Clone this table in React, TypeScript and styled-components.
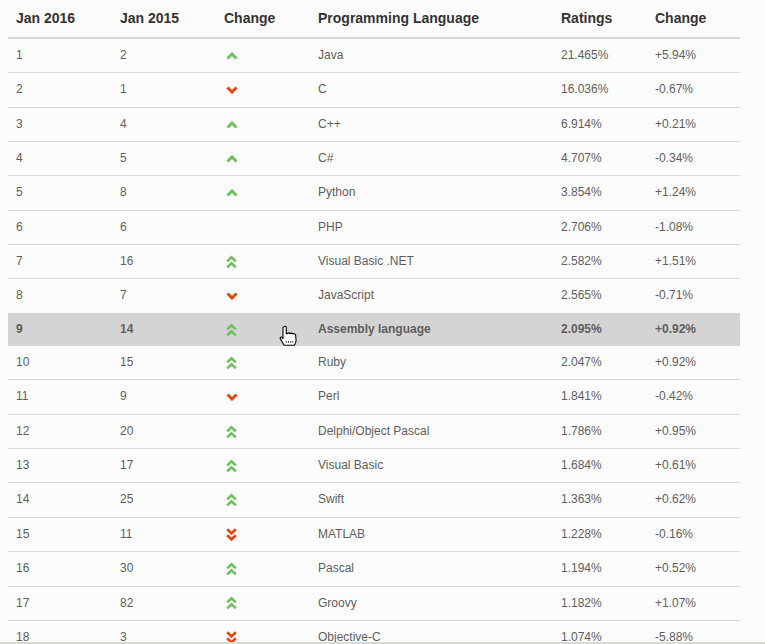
import React from "react";
import styled, { createGlobalStyle } from "styled-components";

const GlobalStyle = createGlobalStyle`
  html, body { overflow: hidden; }
  body {
    margin: 0 0 0 8px;
    background: #fcfcfc;
    font-family: "Liberation Sans", Arial, sans-serif;
  }
`;

const Table = styled.table`
  width: 732px;
  border-collapse: collapse;
  border-spacing: 0;
  table-layout: fixed;
`;

const HeadCell = styled.th`
  text-align: left;
  padding: 8px;
  height: 21px;
  font-size: 14px;
  line-height: 21px;
  font-weight: bold;
  color: #333;
  border-bottom: 2px solid #d6d6d6;
`;

const Row = styled.tr<{ $active?: boolean }>`
  background: ${(p) => (p.$active ? "#d4d4d4" : "transparent")};
  font-weight: ${(p) => (p.$active ? "bold" : "normal")};
  & + & > td { border-top: 1px solid #dadada; }
`;

const Cell = styled.td`
  padding: 8px;
  height: 17.34px;
  font-size: 12px;
  line-height: 17.34px;
  color: #5e5e5e;
  vertical-align: middle;
`;

const IconWrap = styled.span`
  display: inline-block;
  padding-left: 2px;
  vertical-align: middle;
  line-height: 0;
`;

const ScrollEdge = styled.div`
  position: fixed;
  left: 0;
  right: 0;
  bottom: 0;
  height: 2px;
  background: #d8d8d4;
`;

const Cursor = styled.svg`
  position: absolute;
  left: 278px;
  top: 325px;
  pointer-events: none;
`;

type Trend = "up" | "down" | "dup" | "ddown" | "none";

const GREEN = "#6fbf60";
const RED = "#e2470f";

function TrendIcon({ t }: { t: Trend }) {
  if (t === "none") return null;
  if (t === "up" || t === "down") {
    const color = t === "up" ? GREEN : RED;
    const pts = t === "up" ? "1.5,6.5 6,2 10.5,6.5" : "1.5,1.5 6,6 10.5,1.5";
    return (
      <IconWrap>
        <svg width="12" height="8" viewBox="0 0 12 8">
          <polyline points={pts} fill="none" stroke={color} strokeWidth="3" strokeLinejoin="miter" />
        </svg>
      </IconWrap>
    );
  }
  const color = t === "dup" ? GREEN : RED;
  const a = t === "dup" ? "1.2,6.4 5.5,2.2 9.8,6.4" : "1.2,1.2 5.5,5.4 9.8,1.2";
  const b = t === "dup" ? "1.2,12.4 5.5,8.2 9.8,12.4" : "1.2,7.2 5.5,11.4 9.8,7.2";
  return (
    <IconWrap>
      <svg width="11" height="14" viewBox="0 0 11 14">
        <polyline points={a} fill="none" stroke={color} strokeWidth="2.6" />
        <polyline points={b} fill="none" stroke={color} strokeWidth="2.6" />
      </svg>
    </IconWrap>
  );
}

const rows: [string, string, Trend, string, string, string][] = [
  ["1", "2", "up", "Java", "21.465%", "+5.94%"],
  ["2", "1", "down", "C", "16.036%", "-0.67%"],
  ["3", "4", "up", "C++", "6.914%", "+0.21%"],
  ["4", "5", "up", "C#", "4.707%", "-0.34%"],
  ["5", "8", "up", "Python", "3.854%", "+1.24%"],
  ["6", "6", "none", "PHP", "2.706%", "-1.08%"],
  ["7", "16", "dup", "Visual Basic .NET", "2.582%", "+1.51%"],
  ["8", "7", "down", "JavaScript", "2.565%", "-0.71%"],
  ["9", "14", "dup", "Assembly language", "2.095%", "+0.92%"],
  ["10", "15", "dup", "Ruby", "2.047%", "+0.92%"],
  ["11", "9", "down", "Perl", "1.841%", "-0.42%"],
  ["12", "20", "dup", "Delphi/Object Pascal", "1.786%", "+0.95%"],
  ["13", "17", "dup", "Visual Basic", "1.684%", "+0.61%"],
  ["14", "25", "dup", "Swift", "1.363%", "+0.62%"],
  ["15", "11", "ddown", "MATLAB", "1.228%", "-0.16%"],
  ["16", "30", "dup", "Pascal", "1.194%", "+0.52%"],
  ["17", "82", "dup", "Groovy", "1.182%", "+1.07%"],
  ["18", "3", "ddown", "Objective-C", "1.074%", "-5.88%"],
];

const widths = [104, 104, 94, 243, 94, 93];
const heads = ["Jan 2016", "Jan 2015", "Change", "Programming Language", "Ratings", "Change"];

export default function App() {
  return (
    <>
      <GlobalStyle />
      <Table>
        <colgroup>
          {widths.map((w, i) => (
            <col key={i} style={{ width: w }} />
          ))}
        </colgroup>
        <thead>
          <tr>
            {heads.map((h, i) => (
              <HeadCell key={i}>{h}</HeadCell>
            ))}
          </tr>
        </thead>
        <tbody>
          {rows.map((r) => (
            <Row key={r[0]} $active={r[0] === "9"}>
              <Cell>{r[0]}</Cell>
              <Cell>{r[1]}</Cell>
              <Cell>
                <TrendIcon t={r[2]} />
              </Cell>
              <Cell>{r[3]}</Cell>
              <Cell>{r[4]}</Cell>
              <Cell>{r[5]}</Cell>
            </Row>
          ))}
        </tbody>
      </Table>
      <Cursor width="22" height="24" viewBox="0 0 20 22">
        <path
          d="M5.5 1.5 C6.5 0.8 7.5 1.2 7.5 2.5 L7.5 8 L8.5 8 C9 7 10.5 7 11 8 C11.5 7.2 13 7.2 13.5 8.3 C14 7.6 15.5 7.8 16 9 L16.5 14 C16.5 16 15.5 17.5 15 18.5 L5.5 18.5 L2 12.5 C1.5 11.3 2.8 10.5 3.8 11.5 L4.5 12.5 L4.5 2.5 Z"
          fill="#fff"
          stroke="#000"
          strokeWidth="1"
          strokeLinejoin="round"
        />
        <path d="M7 15.5 H14.5" stroke="#000" strokeWidth="1" strokeDasharray="1 1" />
      </Cursor>
      <ScrollEdge />
    </>
  );
}
